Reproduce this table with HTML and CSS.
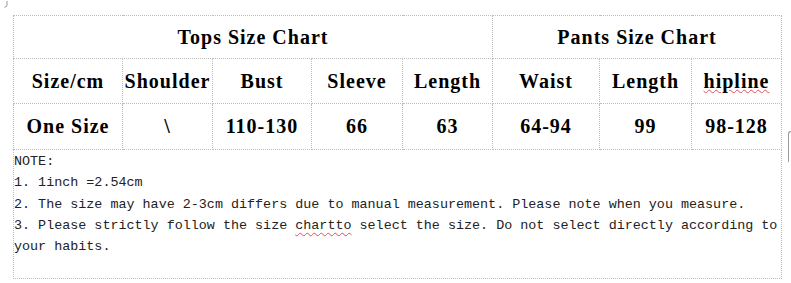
FILE: index.html
```html
<!DOCTYPE html>
<html>
<head>
<meta charset="utf-8">
<link rel="stylesheet" href="styles.css">
</head>
<body>
<svg class="corner-mark" width="8" height="9" viewBox="0 0 8 9"><path d="M6 1 V5 Q6 7 3.5 7.3" fill="none" stroke="#999" stroke-width="1"/></svg>
<div class="sheet">
  <table class="chart">
    <colgroup>
      <col class="c1"><col class="c2"><col class="c3"><col class="c4"><col class="c5"><col class="c6"><col class="c7"><col class="c8">
    </colgroup>
    <tr class="r1">
      <td colspan="5">Tops Size Chart</td>
      <td colspan="3">Pants Size Chart</td>
    </tr>
    <tr class="r2">
      <td>Size/cm</td><td>Shoulder</td><td>Bust</td><td>Sleeve</td><td>Length</td><td>Waist</td><td>Length</td><td><span class="spell spell-head">hipline</span></td>
    </tr>
    <tr class="r3">
      <td>One Size</td><td>\</td><td>110-130</td><td>66</td><td>63</td><td>64-94</td><td>99</td><td>98-128</td>
    </tr>
  </table>
  <div class="note">
    <div>NOTE:</div>
    <div>1. 1inch =2.54cm</div>
    <div>2. The size may have 2-3cm differs due to manual measurement. Please note when you measure.</div>
    <div>3. Please strictly follow the size <span class="spell">chartto</span> select the size. Do not select directly according to your habits.</div>
  </div>
</div>
<div class="edge-tab"></div>
</body>
</html>
```
FILE: styles.css
```css
html, body {
  margin: 0;
  padding: 0;
  background: #fff;
}
body {
  position: relative;
  width: 791px;
  height: 283px;
  overflow: hidden;
}
.corner-mark {
  position: absolute;
  left: 1px;
  top: 0;
}
.sheet {
  padding: 15px 0 0 13px;
}
.chart {
  border-collapse: collapse;
  table-layout: fixed;
  width: 768px;
  font-family: "Liberation Serif", "Times New Roman", serif;
  font-weight: bold;
  font-size: 20px;
  color: #000;
}
.chart td {
  border: 1px dotted #bdbdbd;
  padding: 0;
  text-align: center;
  vertical-align: middle;
  white-space: nowrap;
  letter-spacing: 1px;
}
.c1 { width: 109px; }
.c2 { width: 90px; }
.c3 { width: 99px; }
.c4 { width: 91px; }
.c5 { width: 90px; }
.c6 { width: 107px; }
.c7 { width: 92px; }
.c8 { width: 90px; }
.r1 { height: 43px; }
.r2 { height: 45px; }
.r3 { height: 46px; }
.spell {
  text-decoration: underline wavy #e0505a;
  text-decoration-thickness: 1px;
  text-underline-offset: 3px;
}
.spell-head {
  text-underline-offset: 1px;
}
.note {
  width: 767px;
  height: 127px;
  border: 1px dotted #bdbdbd;
  border-top: none;
  font-family: "Liberation Mono", "DejaVu Sans Mono", monospace;
  font-size: 13.4px;
  line-height: 21.3px;
  color: #222;
  padding-top: 1px;
  box-sizing: content-box;
}
.edge-tab {
  position: absolute;
  left: 788px;
  top: 131px;
  width: 4px;
  height: 30px;
  border-left: 1px solid #9a9a9a;
  border-top: 1px solid #9a9a9a;
  border-top-left-radius: 3px;
}
```
